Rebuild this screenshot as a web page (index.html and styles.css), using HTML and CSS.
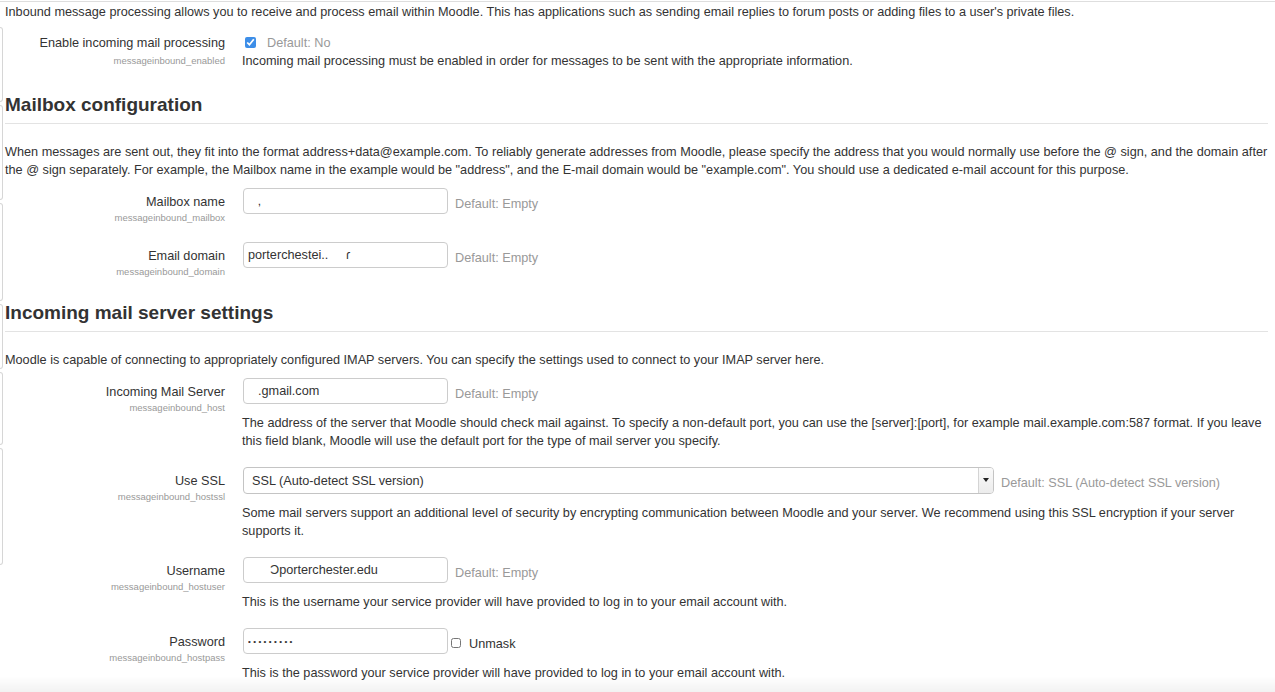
FILE: index.html
```html
<!DOCTYPE html>
<html lang="en">
<head>
    <meta charset="UTF-8">
    <title>Inbound message configuration</title>
    <link rel="stylesheet" href="styles.css">
</head>
<body>
<div class="strona">
    <div class="krawedz">
        <div class="kr" style="height: 73px; margin-top: 25px"></div>
        <div class="kr" style="height: 93px"></div>
        <div class="kr" style="height: 96px"></div>
        <div class="kr" style="height: 63px"></div>
        <div class="kr" style="height: 71px"></div>
        <div class="kr" style="height: 115px"></div>
    </div>
    <div class="tresc">
        <p class="intro">Inbound message processing allows you to receive and process email within Moodle. This has applications such as sending email replies to forum posts or adding files to a user's private files.</p>

        <div class="ustawienie pierwsze">
            <div class="etykieta">
                <label>Enable incoming mail processing</label>
                <span class="nazwa">messageinbound_enabled</span>
            </div>
            <div class="pole">
                <div class="linia">
                    <input type="checkbox" class="check" checked>
                    <span class="domyslne">Default: No</span>
                </div>
                <div class="opis">Incoming mail processing must be enabled in order for messages to be sent with the appropriate information.</div>
            </div>
        </div>

        <h3 class="naglowek">Mailbox configuration</h3>
        <p class="info">When messages are sent out, they fit into the format address+data@example.com. To reliably generate addresses from Moodle, please specify the address that you would normally use before the @ sign, and the domain after the @ sign separately. For example, the Mailbox name in the example would be "address", and the E-mail domain would be "example.com". You should use a dedicated e-mail account for this purpose.</p>

        <div class="ustawienie">
            <div class="etykieta">
                <label>Mailbox name</label>
                <span class="nazwa">messageinbound_mailbox</span>
            </div>
            <div class="pole">
                <div class="linia">
                    <input type="text" class="tekst ukryty" value="&#8218;">
                    <span class="domyslne">Default: Empty</span>
                </div>
            </div>
        </div>

        <div class="ustawienie">
            <div class="etykieta">
                <label>Email domain</label>
                <span class="nazwa">messageinbound_domain</span>
            </div>
            <div class="pole">
                <div class="linia">
                    <input type="text" class="tekst" value="porterchestei..     &#638;">
                    <span class="domyslne">Default: Empty</span>
                </div>
            </div>
        </div>

        <h3 class="naglowek drugi">Incoming mail server settings</h3>
        <p class="info">Moodle is capable of connecting to appropriately configured IMAP servers. You can specify the settings used to connect to your IMAP server here.</p>

        <div class="ustawienie">
            <div class="etykieta">
                <label>Incoming Mail Server</label>
                <span class="nazwa">messageinbound_host</span>
            </div>
            <div class="pole">
                <div class="linia">
                    <input type="text" class="tekst ukryty" value=".gmail.com">
                    <span class="domyslne">Default: Empty</span>
                </div>
                <div class="opis">The address of the server that Moodle should check mail against. To specify a non-default port, you can use the [server]:[port], for example mail.example.com:587 format. If you leave this field blank, Moodle will use the default port for the type of mail server you specify.</div>
            </div>
        </div>

        <div class="ustawienie">
            <div class="etykieta">
                <label>Use SSL</label>
                <span class="nazwa">messageinbound_hostssl</span>
            </div>
            <div class="pole">
                <div class="linia">
                    <div class="wybor">
                        <select>
                            <option>SSL (Auto-detect SSL version)</option>
                        </select>
                        <span class="strzalka"></span>
                    </div>
                    <span class="domyslne">Default: SSL (Auto-detect SSL version)</span>
                </div>
                <div class="opis">Some mail servers support an additional level of security by encrypting communication between Moodle and your server. We recommend using this SSL encryption if your server supports it.</div>
            </div>
        </div>

        <div class="ustawienie">
            <div class="etykieta">
                <label>Username</label>
                <span class="nazwa">messageinbound_hostuser</span>
            </div>
            <div class="pole">
                <div class="linia">
                    <input type="text" class="tekst user" value="&#390;porterchester.edu">
                    <span class="domyslne">Default: Empty</span>
                </div>
                <div class="opis">This is the username your service provider will have provided to log in to your email account with.</div>
            </div>
        </div>

        <div class="ustawienie">
            <div class="etykieta">
                <label>Password</label>
                <span class="nazwa">messageinbound_hostpass</span>
            </div>
            <div class="pole">
                <div class="linia">
                    <input type="password" class="tekst haslo" value="123456789">
                    <input type="checkbox" class="check maly">
                    <span class="odkryj">Unmask</span>
                </div>
                <div class="opis">This is the password your service provider will have provided to log in to your email account with.</div>
            </div>
        </div>
    </div>
</div>
<div class="cien"></div>
</body>
</html>
```

FILE: styles.css
```css
body {
    margin: 0;
    padding: 1px 0 0 0;
    font-family: "Liberation Sans", Arial, sans-serif;
    font-size: 12.7px;
    color: #333;
    background-color: white;
    overflow: hidden;
}
.strona {
    display: flex;
    border-top: 1px solid #dedede;
}
.krawedz {
    width: 3px;
    display: flex;
    flex-direction: column;
    gap: 3px;
    flex-shrink: 0;
}
.kr {
    border: 1px solid #d6d6d6;
    border-left: none;
    border-radius: 0 3px 3px 0;
}
.tresc {
    flex: 1;
    padding: 0 7px 0 2px;
}
p {
    margin: 0;
    line-height: 18px;
}
.intro {
    padding-top: 1px;
}
.info {
    margin-top: 19px;
}
.naglowek {
    font-size: 19px;
    font-weight: bold;
    line-height: 24px;
    margin: 23px 0 0 0;
    padding-bottom: 6px;
    border-bottom: 1px solid #e3e3e3;
}
.naglowek.drugi {
    margin-top: 22px;
}
.ustawienie {
    display: grid;
    grid-template-columns: 237px 1fr;
    margin-top: 10px;
    margin-bottom: 17px;
}
.ustawienie.pierwsze {
    margin-top: 13px;
}
.info + .ustawienie {
    margin-top: 9px;
}
.ustawienie + .ustawienie {
    margin-top: 0;
}
.etykieta {
    display: flex;
    flex-direction: column;
    align-items: flex-end;
    padding-right: 17px;
    padding-top: 5px;
}
.pierwsze .etykieta {
    padding-top: 0;
}
.etykieta label {
    line-height: 18px;
}
.nazwa {
    font-size: 9.5px;
    color: #999;
    line-height: 14px;
}
.pierwsze .nazwa {
    line-height: 18px;
}
.linia {
    display: flex;
    align-items: center;
    min-height: 18px;
}
.opis {
    line-height: 18px;
    margin-top: 10px;
}
.pierwsze .opis {
    margin-top: 0;
}
.check {
    width: 11px;
    height: 11px;
    margin: 0 11px 1px 3px;
    accent-color: #3d8ee8;
}
.check.maly {
    margin: 4px 8px 0 3px;
    width: 10px;
    height: 10px;
}
.domyslne {
    color: #999;
    padding-top: 5px;
    margin-left: 7px;
}
.pierwsze .domyslne {
    padding-top: 0;
    margin-left: 0;
}
.tekst {
    box-sizing: border-box;
    width: 205px;
    height: 26px;
    margin: 0 0 0 1px;
    padding: 0 4px;
    border: 1px solid #ccc;
    border-radius: 4px;
    font-family: "Liberation Sans", Arial, sans-serif;
    font-size: 12.7px;
    color: #333;
}
.tekst.ukryty {
    padding-left: 14px;
}
.tekst.user {
    padding-left: 26px;
}
.haslo {
    font-size: 8px;
    letter-spacing: 2.4px;
}
.odkryj {
    padding-top: 5px;
}
.wybor {
    position: relative;
    margin-left: 1px;
}
.wybor select {
    appearance: none;
    box-sizing: border-box;
    width: 751px;
    height: 27px;
    padding: 0 8px;
    border: 1px solid #c4c4c4;
    border-radius: 4px;
    background: white;
    font-family: "Liberation Sans", Arial, sans-serif;
    font-size: 12.7px;
    color: #333;
}
.strzalka {
    position: absolute;
    right: 1px;
    top: 1px;
    width: 14px;
    height: 25px;
    border-left: 1px solid #d4d4d4;
    border-radius: 0 3px 3px 0;
    background: linear-gradient(#fafafa, #ececec);
}
.strzalka::after {
    content: "";
    position: absolute;
    left: 4px;
    top: 10px;
    border-left: 3px solid transparent;
    border-right: 3px solid transparent;
    border-top: 4px solid #222;
}
.cien {
    position: fixed;
    left: 0;
    right: 0;
    bottom: 0;
    height: 16px;
    background: linear-gradient(rgba(0,0,0,0), rgba(0,0,0,0.05));
}
```
